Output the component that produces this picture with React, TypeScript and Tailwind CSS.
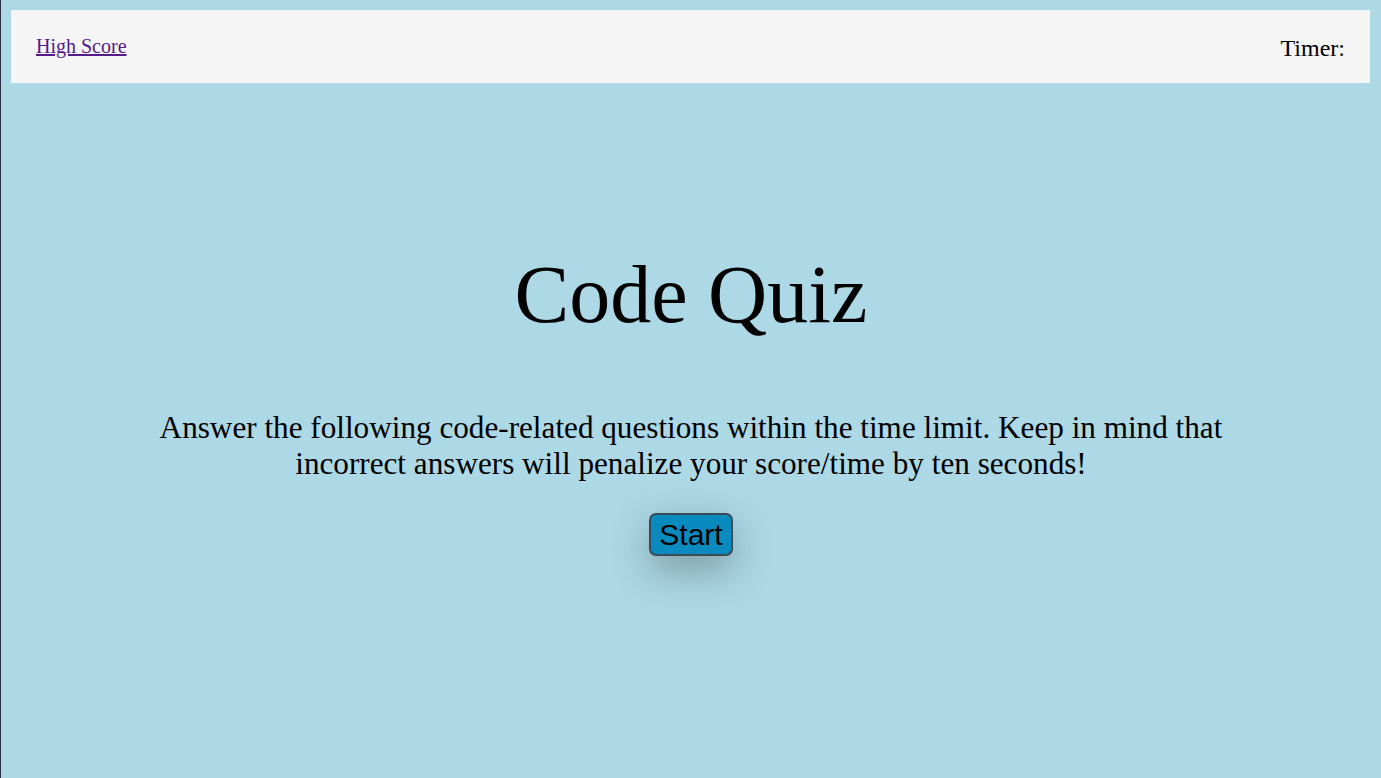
export default function App() {
  return (
    <div className="min-h-screen bg-[#add8e6] border-l border-[#2a2f45] p-[10px] font-['Liberation_Serif',serif]">
      <header className="h-[73px] bg-[#f5f5f5] flex items-center justify-between pl-[25px] pr-[25px] mr-[1px]">
        <a href="#" className="text-[20px] text-[#551a8b] underline -mt-[1px]">
          High Score
        </a>
        <div className="text-[24px] text-black mt-[3px]">Timer:</div>
      </header>

      <main className="flex flex-col items-center text-center">
        <h1 className="mt-[166px] text-[82px] leading-[92px] text-black">Code Quiz</h1>
        <p className="mt-[69px] w-[80%] text-[31.2px] leading-[36px] text-black">
          Answer the following code-related questions within the time limit. Keep in mind that
          incorrect answers will penalize your score/time by ten seconds!
        </p>
        <button className="mt-[31px] h-[43px] px-[8px] bg-[#0a8bbf] border-2 border-[#3d4a52] rounded-[7px] text-[30px] leading-none font-['Liberation_Sans',sans-serif] text-black shadow-[0_14px_40px_rgba(0,0,0,0.3)]">
          Start
        </button>
      </main>
    </div>
  );
}
